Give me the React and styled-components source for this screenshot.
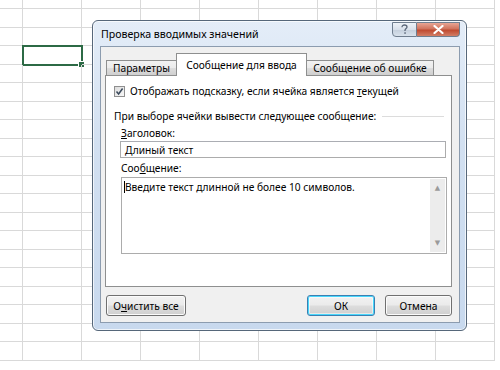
import styled, { createGlobalStyle } from "styled-components";

const GlobalStyle = createGlobalStyle`
  html, body {
    margin: 0;
    padding: 0;
    background: #ffffff;
    width: 500px;
    height: 370px;
    overflow: hidden;
  }
`;

const Page = styled.div`
  position: relative;
  width: 500px;
  height: 370px;
  overflow: hidden;
  font-family: "Noto Sans", "DejaVu Sans", sans-serif;
  font-size: 10.2px;
  color: #1e1e1e;
`;

const Sheet = styled.div`
  display: grid;
  grid-template-columns: 23px repeat(8, 59px);
  grid-template-rows: 9px repeat(19, 18.5px);
`;

const Cell = styled.div`
  position: relative;
  border-right: 1px solid #d9d9d9;
  border-bottom: 1px solid #d9d9d9;
  box-sizing: border-box;
  ${({ selected }) =>
    selected &&
    `
    outline: 2px solid #2c6a45;
    outline-offset: -1px;
  `}
`;

const Handle = styled.span`
  position: absolute;
  right: -4px;
  bottom: -4px;
  width: 5px;
  height: 5px;
  background: #2c6a45;
  border: 1px solid #fff;
`;

const Dialog = styled.div`
  position: absolute;
  left: 92px;
  top: 20px;
  width: 375px;
  height: 311px;
  box-sizing: border-box;
  border: 1px solid #56677a;
  border-radius: 6px;
  background: linear-gradient(180deg, #e4edf8 0%, #d2e0f1 40%, #c8d9ee 100%);
  box-shadow: inset 0 0 0 1px rgba(255, 255, 255, 0.7);
  display: flex;
  flex-direction: column;
  padding: 0 6px 7px 7px;
`;

const TitleBar = styled.div`
  height: 25px;
  display: flex;
  align-items: flex-start;
  justify-content: space-between;
`;

const Title = styled.div`
  font-size: 10.6px;
  color: #000;
  padding-top: 6px;
  padding-left: 1px;
`;

const Caption = styled.div`
  display: flex;
  margin-top: 1px;
`;

const CapBtn = styled.div`
  height: 15px;
  display: flex;
  align-items: center;
  justify-content: center;
  box-sizing: border-box;
  border: 1px solid #6f7d8e;
  ${({ close }) =>
    close
      ? `
    width: 43px;
    border-left: none;
    border-radius: 0 0 4px 0;
    background: linear-gradient(180deg, #e8a595 0%, #d0735d 45%, #c04a30 55%, #d27e66 100%);
  `
      : `
    width: 25px;
    border-radius: 0 0 0 4px;
    background: linear-gradient(180deg, #eef2f7 0%, #d8e0ea 50%, #c5d0dd 55%, #d9e2ec 100%);
  `}
`;

const Client = styled.div`
  flex: 1;
  background: #f0f0f0;
  border: 1px solid #8c9caf;
  display: flex;
  flex-direction: column;
  padding: 7px 7px 6px 4px;
`;

const Tabs = styled.div`
  display: flex;
  align-items: flex-end;
  padding-left: 1px;
  height: 22px;
  position: relative;
  z-index: 1;
  margin-bottom: -1px;
`;

const Tab = styled.div`
  box-sizing: border-box;
  width: ${({ w }) => w}px;
  border: 1px solid #8e8f8f;
  border-bottom: ${({ active }) => (active ? "none" : "1px solid #8e8f8f")};
  margin-left: ${({ active }) => (active ? "-1px" : "0")};
  margin-right: ${({ active }) => (active ? "-1px" : "0")};
  height: ${({ active }) => (active ? "23px" : "16px")};
  display: flex;
  justify-content: center;
  align-items: ${({ active }) => (active ? "flex-start" : "center")};
  padding-top: ${({ active }) => (active ? "4px" : "0")};
  background: ${({ active }) =>
    active ? "#ffffff" : "linear-gradient(180deg, #f2f2f2 0%, #ebebeb 50%, #dddddd 51%, #cfcfcf 100%)"};
  color: #000;
  white-space: nowrap;
  position: relative;
  z-index: ${({ active }) => (active ? 2 : 1)};
`;

const Panel = styled.div`
  height: 212px;
  box-sizing: border-box;
  background: #ffffff;
  border: 1px solid #8e8f8f;
  display: flex;
  flex-direction: column;
  padding: 8px 6px 0 8px;
`;

const CheckRow = styled.label`
  display: flex;
  align-items: center;
  gap: 5px;
  height: 14px;
  color: #000;
`;

const Box = styled.span`
  width: 11px;
  height: 11px;
  box-sizing: border-box;
  border: 1px solid #8f8f8f;
  background: linear-gradient(135deg, #dcdcdc, #f8f8f8);
  display: flex;
  align-items: center;
  justify-content: center;
`;

const GroupTitle = styled.div`
  display: flex;
  align-items: center;
  gap: 6px;
  margin-top: 11px;
  height: 14px;
  color: #000;
  &::after {
    content: "";
    flex: 1;
    height: 1px;
    background: #dcdcdc;
    margin-right: 1px;
  }
`;

const Field = styled.div`
  display: flex;
  flex-direction: column;
  padding-left: 7px;
  margin-top: ${({ gap }) => gap || 4}px;
`;

const FieldLabel = styled.div`
  color: #000;
  height: 14px;
  line-height: 14px;
  margin-bottom: ${({ mb }) => mb || 1}px;
  u {
    text-decoration: underline;
  }
`;

const TextInput = styled.div`
  height: 17px;
  box-sizing: border-box;
  border: 1px solid #acacac;
  border-top-color: #abadb3;
  background: #fff;
  padding: 1px 4px;
  color: #000;
  width: 326px;
  margin-left: -1px;
`;

const TextArea = styled.div`
  height: 77px;
  box-sizing: border-box;
  border: 1px solid #acacac;
  background: #fff;
  display: flex;
  width: 326px;
`;

const AreaText = styled.div`
  flex: 1;
  padding: 2px 2px;
  color: #000;
`;

const Caret = styled.span`
  display: inline-block;
  width: 1px;
  height: 12px;
  background: #000;
  vertical-align: -2px;
`;

const Scroll = styled.div`
  width: 15px;
  margin: 1px;
  background: #ececec;
  display: flex;
  flex-direction: column;
  justify-content: space-between;
  align-items: center;
  padding: 6px 0;
  box-sizing: border-box;
  color: #9a9a9a;
  font-size: 7px;
  line-height: 6px;
`;

const Footer = styled.div`
  display: flex;
  align-items: center;
  margin-top: 8px;
  padding-left: 1px;
`;

const Button = styled.div`
  width: ${({ w }) => w}px;
  height: 21px;
  box-sizing: border-box;
  border: 1px solid ${({ primary }) => (primary ? "#3c7fb1" : "#707070")};
  border-radius: 3px;
  background: linear-gradient(180deg, #f2f2f2 0%, #ebebeb 48%, #dddddd 52%, #cfcfcf 100%);
  box-shadow: ${({ primary }) =>
    primary ? "inset 0 0 0 1px #48d7fc, inset 0 0 0 2px rgba(255,255,255,0.5)" : "inset 0 0 0 1px #fbfbfb"};
  display: flex;
  align-items: center;
  justify-content: center;
  color: #000;
  margin-left: ${({ ml }) => ml || 0}px;
  u {
    text-decoration: underline;
  }
`;

const Spacer = styled.div`
  flex: 1;
`;

const QuestionIcon = () => (
  <svg width="9" height="11" viewBox="0 0 9 11">
    <path
      d="M2 3.2 C2 1.6 3.2 1 4.5 1 C6 1 7 1.8 7 3 C7 4.4 5 4.6 5 6.3 L5 7"
      fill="none"
      stroke="#5b6778"
      strokeWidth="1.3"
    />
    <rect x="4.3" y="8.3" width="1.5" height="1.5" fill="#5b6778" />
  </svg>
);

const CloseIcon = () => (
  <svg width="11" height="9" viewBox="0 0 11 9">
    <path d="M1.5 1 L9.5 8 M9.5 1 L1.5 8" stroke="#ffffff" strokeWidth="2.2" strokeLinecap="round" />
  </svg>
);

const CheckIcon = () => (
  <svg width="9" height="9" viewBox="0 0 9 9">
    <path d="M1.5 4.5 L3.6 7 L7.6 1.5" fill="none" stroke="#3b4a5c" strokeWidth="1.5" />
  </svg>
);

const App = () => {
  const cells = [];
  for (let r = 0; r < 20; r++) {
    for (let c = 0; c < 9; c++) {
      const selected = r === 3 && c === 1;
      cells.push(
        <Cell key={`${r}-${c}`} selected={selected}>
          {selected && <Handle />}
        </Cell>
      );
    }
  }

  return (
    <Page>
      <GlobalStyle />
      <Sheet>{cells}</Sheet>
      <Dialog>
        <TitleBar>
          <Title>Проверка вводимых значений</Title>
          <Caption>
            <CapBtn>
              <QuestionIcon />
            </CapBtn>
            <CapBtn close>
              <CloseIcon />
            </CapBtn>
          </Caption>
        </TitleBar>
        <Client>
          <Tabs>
            <Tab w={71}>Параметры</Tab>
            <Tab w={131} active>
              Сообщение для ввода
            </Tab>
            <Tab w={128}>Сообщение об ошибке</Tab>
          </Tabs>
          <Panel>
            <CheckRow>
              <Box>
                <CheckIcon />
              </Box>
              <span>
                Отображать подсказку, если ячейка является <u>т</u>екущей
              </span>
            </CheckRow>
            <GroupTitle>При выборе ячейки вывести следующее сообщение:</GroupTitle>
            <Field gap={3}>
              <FieldLabel>
                <u>З</u>аголовок:
              </FieldLabel>
              <TextInput>Длиный текст</TextInput>
            </Field>
            <Field gap={3}>
              <FieldLabel mb={2}>
                Соо<u>б</u>щение:
              </FieldLabel>
              <TextArea>
                <AreaText>
                  <Caret />
                  Введите текст длинной не более 10 символов.
                </AreaText>
                <Scroll>
                  <span>▲</span>
                  <span>▼</span>
                </Scroll>
              </TextArea>
            </Field>
          </Panel>
          <Footer>
            <Button w={80}>
              О<u>ч</u>истить все
            </Button>
            <Spacer />
            <Button w={68} primary>
              ОК
            </Button>
            <Button w={67} ml={10}>
              Отмена
            </Button>
          </Footer>
        </Client>
      </Dialog>
    </Page>
  );
};

export default App;
